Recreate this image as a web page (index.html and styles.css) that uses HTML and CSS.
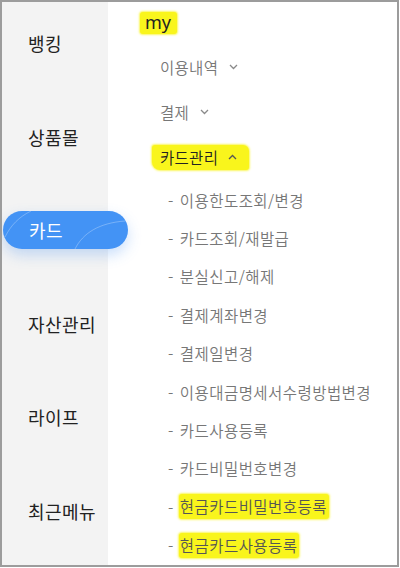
FILE: index.html
```html
<!DOCTYPE html>
<html lang="ko">
<head>
<meta charset="utf-8">
<link rel="stylesheet" href="styles.css">
</head>
<body>
<div class="frame">
  <nav class="side">
    <div class="side-item">뱅킹</div>
    <div class="side-item">상품몰</div>
    <div class="side-item active">
      <svg class="pill-deco" width="125" height="38" viewBox="0 0 125 38"><path d="M2 26 C 8 14, 16 6, 28 0" fill="none" stroke="rgba(255,255,255,0.28)" stroke-width="1"/><path d="M72 38 C 80 22, 96 12, 122 10" fill="none" stroke="rgba(255,255,255,0.28)" stroke-width="1"/></svg>
      <span>카드</span>
    </div>
    <div class="side-item">자산관리</div>
    <div class="side-item">라이프</div>
    <div class="side-item">최근메뉴</div>
  </nav>
  <main class="menu">
    <div class="my"><span class="hl hl-my">my</span></div>
    <div class="top">이용내역<svg class="chev" width="9" height="6" viewBox="0 0 9 6"><path d="M1 1 L4.5 4.5 L8 1" fill="none" stroke="#8a8a8a" stroke-width="1.3"/></svg></div>
    <div class="top">결제<svg class="chev" width="9" height="6" viewBox="0 0 9 6"><path d="M1 1 L4.5 4.5 L8 1" fill="none" stroke="#8a8a8a" stroke-width="1.3"/></svg></div>
    <div class="top open"><span class="hl hl-card">카드관리<svg class="chev up" width="9" height="6" viewBox="0 0 9 6"><path d="M1 5 L4.5 1.5 L8 5" fill="none" stroke="#555" stroke-width="1.3"/></svg></span></div>
    <ul class="sub">
      <li><span class="dash">-</span>이용한도조회/변경</li>
      <li><span class="dash">-</span>카드조회/재발급</li>
      <li><span class="dash">-</span>분실신고/해제</li>
      <li><span class="dash">-</span>결제계좌변경</li>
      <li><span class="dash">-</span>결제일변경</li>
      <li><span class="dash">-</span>이용대금명세서수령방법변경</li>
      <li><span class="dash">-</span>카드사용등록</li>
      <li><span class="dash">-</span>카드비밀번호변경</li>
      <li><span class="dash">-</span><span class="hl hl-sub">현금카드비밀번호등록</span></li>
      <li><span class="dash">-</span><span class="hl hl-sub">현금카드사용등록</span></li>
    </ul>
  </main>
</div>
</body>
</html>
```

FILE: styles.css
```css
* { box-sizing: border-box; }
html, body { margin: 0; padding: 0; background: #fff; }
body { font-family: "Noto Sans CJK KR", "Noto Sans", sans-serif; font-weight: 350; }
.frame {
  width: 399px;
  height: 567px;
  border: 2px solid #9c9c9c;
  display: flex;
  overflow: hidden;
  background: #fff;
}
.side {
  width: 106px;
  flex: none;
  background: #f3f3f3;
  display: flex;
  flex-direction: column;
  gap: 55.5px;
  padding-top: 22px;
  position: relative;
  z-index: 2;
}
.side-item {
  height: 38px;
  line-height: 38px;
  font-size: 18px;
  font-weight: 400;
  letter-spacing: 0.4px;
  color: #222;
  padding-left: 26px;
  white-space: nowrap;
}
.side-item.active {
  position: relative;
  width: 125px;
  margin-left: 1px;
  padding-left: 26px;
  border-radius: 19px;
  background: #4393f5;
  color: #fff;
  box-shadow: 0 6px 14px rgba(66, 140, 240, 0.28);
}
.side-item.active span { position: relative; }
.pill-deco { position: absolute; left: 0; top: 0; }
.menu {
  flex: 1;
  padding-left: 38px;
  padding-top: 0;
}
.my {
  height: 42px;
  display: flex;
  align-items: center;
  font-family: "Noto Sans", sans-serif;
  font-weight: 400;
  font-size: 18px;
  color: #222;
}
.hl {
  background: #f9f51c;
  box-shadow: 0 0 2px 1px rgba(249, 245, 28, 0.7);
  border-radius: 3px;
}
.hl-my { padding: 0 6px 1px 5px; margin-left: -6px; line-height: 21px; display: inline-block; }
.top {
  height: 45.5px;
  display: flex;
  align-items: center;
  padding-left: 14px;
  font-size: 15.5px;
  letter-spacing: 0.3px;
  color: #777;
}
.chev { margin-left: 11px; }
.top.open { color: #222; }
.hl-card {
  display: inline-flex;
  align-items: center;
  padding: 1px 12px 2px 8px;
  margin-left: -8px;
  border-radius: 3px 6px 3px 8px;
}
.chev.up { margin-left: 10px; }
.sub {
  list-style: none;
  margin: 0;
  padding: 0 0 0 22px;
}
.sub li {
  height: 38.4px;
  display: flex;
  align-items: center;
  font-size: 15.5px;
  letter-spacing: 0.45px;
  color: #777;
  white-space: nowrap;
}
.dash { margin-right: 6px; }
.hl-sub {
  color: #555;
  padding: 1px 2px 2px 1px;
  margin-left: -1px;
}
```
